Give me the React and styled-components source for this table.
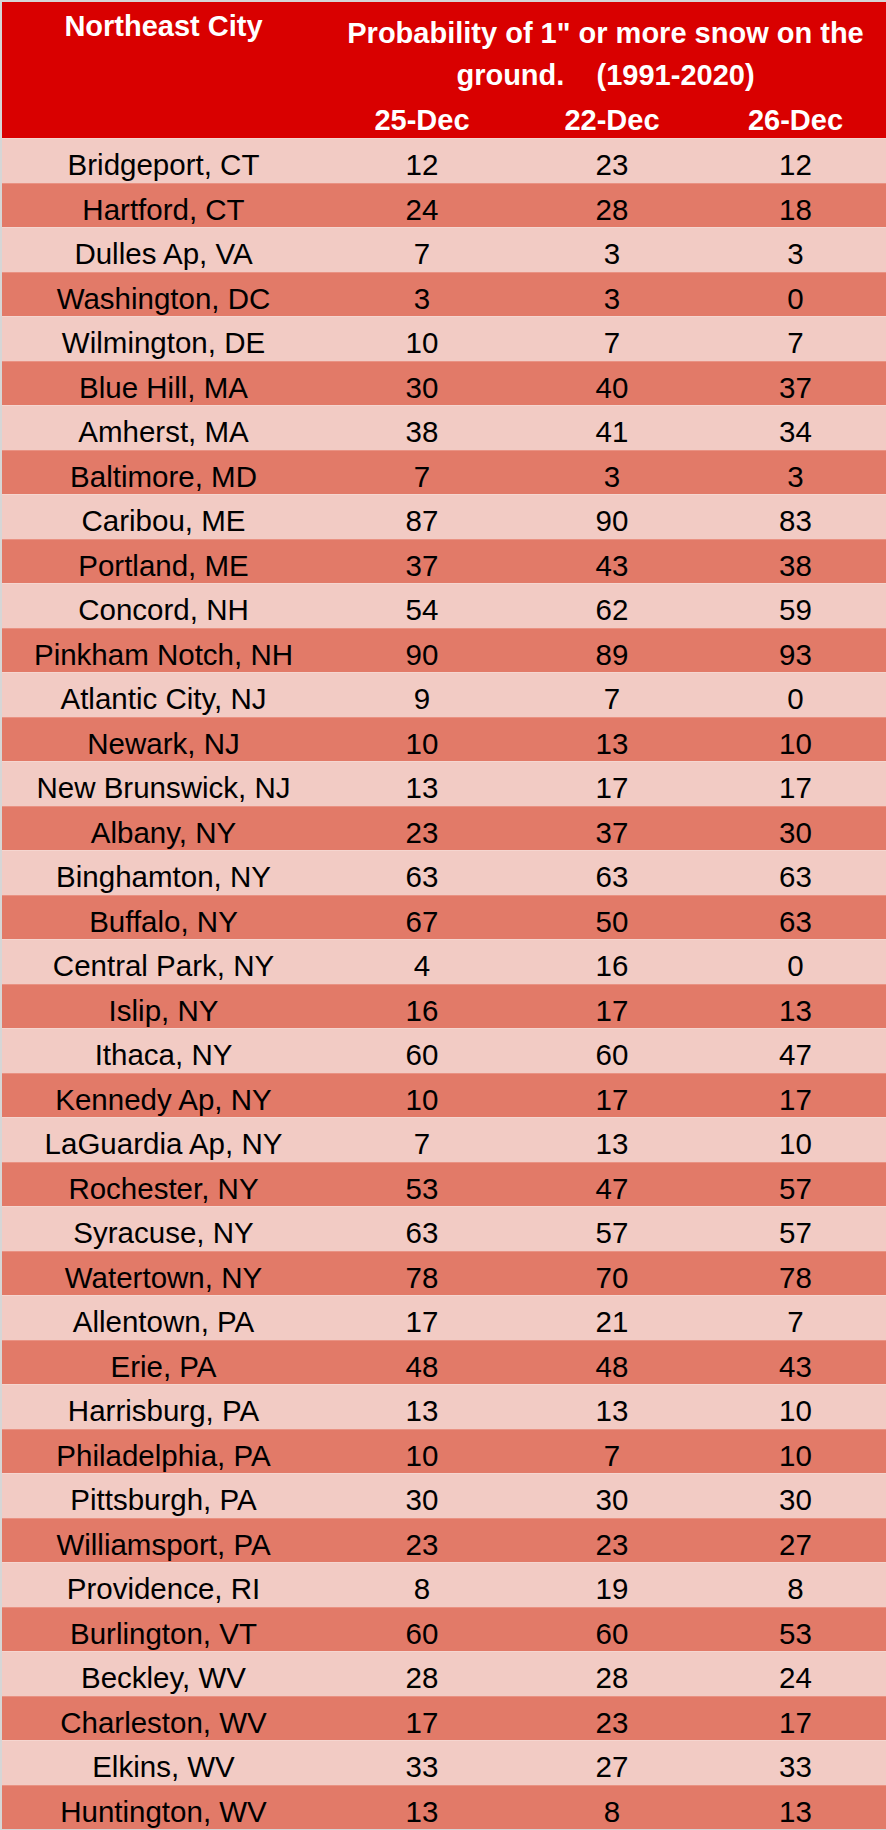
import styled, { createGlobalStyle } from 'styled-components';

const rows = [
    ['Bridgeport, CT', 12, 23, 12],
    ['Hartford, CT', 24, 28, 18],
    ['Dulles Ap, VA', 7, 3, 3],
    ['Washington, DC', 3, 3, 0],
    ['Wilmington, DE', 10, 7, 7],
    ['Blue Hill, MA', 30, 40, 37],
    ['Amherst, MA', 38, 41, 34],
    ['Baltimore, MD', 7, 3, 3],
    ['Caribou, ME', 87, 90, 83],
    ['Portland, ME', 37, 43, 38],
    ['Concord, NH', 54, 62, 59],
    ['Pinkham Notch, NH', 90, 89, 93],
    ['Atlantic City, NJ', 9, 7, 0],
    ['Newark, NJ', 10, 13, 10],
    ['New Brunswick, NJ', 13, 17, 17],
    ['Albany, NY', 23, 37, 30],
    ['Binghamton, NY', 63, 63, 63],
    ['Buffalo, NY', 67, 50, 63],
    ['Central Park, NY', 4, 16, 0],
    ['Islip, NY', 16, 17, 13],
    ['Ithaca, NY', 60, 60, 47],
    ['Kennedy Ap, NY', 10, 17, 17],
    ['LaGuardia Ap, NY', 7, 13, 10],
    ['Rochester, NY', 53, 47, 57],
    ['Syracuse, NY', 63, 57, 57],
    ['Watertown, NY', 78, 70, 78],
    ['Allentown, PA', 17, 21, 7],
    ['Erie, PA', 48, 48, 43],
    ['Harrisburg, PA', 13, 13, 10],
    ['Philadelphia, PA', 10, 7, 10],
    ['Pittsburgh, PA', 30, 30, 30],
    ['Williamsport, PA', 23, 23, 27],
    ['Providence, RI', 8, 19, 8],
    ['Burlington, VT', 60, 60, 53],
    ['Beckley, WV', 28, 28, 24],
    ['Charleston, WV', 17, 23, 17],
    ['Elkins, WV', 33, 27, 33],
    ['Huntington, WV', 13, 8, 13],
];

const dates = ['25-Dec', '22-Dec', '26-Dec'];

export default function App() {
    return (
        <>
            <GlobalStyle />
            <Sheet>
                <Header>
                    <CityHead>Northeast City</CityHead>
                    <Title>
                        Probability of 1" or more snow on the<br />
                        {'ground.    (1991-2020)'}
                    </Title>
                    {dates.map(d => <DateHead key={d}>{d}</DateHead>)}
                </Header>
                {rows.map((r, i) => (
                    <Row key={r[0]} $dark={i % 2 === 1}>
                        <Cell>{r[0]}</Cell>
                        <Cell>{r[1]}</Cell>
                        <Cell>{r[2]}</Cell>
                        <Cell>{r[3]}</Cell>
                    </Row>
                ))}
            </Sheet>
        </>
    );
}

const GlobalStyle = createGlobalStyle`
    html, body {
        margin: 0;
        padding: 0;
        background: #d6d6d6;
    }
`;

const cols = '323px 194px 186px 181px';

const Sheet = styled.div`
    width: 884px;
    padding: 2px 0 0 2px;
    font-family: "Liberation Sans", Arial, sans-serif;
    font-size: 29.5px;
    color: #000;
`;

const Header = styled.div`
    display: grid;
    grid-template-columns: ${cols};
    grid-template-rows: 96px 40px;
    background: #d90000;
    color: #fff;
    font-weight: bold;
    font-size: 29px;
`;

const CityHead = styled.div`
    grid-column: 1;
    grid-row: 1 / 3;
    padding-top: 4px;
    line-height: 41px;
    text-align: center;
`;

const Title = styled.div`
    grid-column: 2 / 5;
    grid-row: 1;
    padding-top: 10px;
    line-height: 42px;
    text-align: center;
    white-space: pre;
`;

const DateHead = styled.div`
    grid-row: 2;
    padding-top: 4px;
    line-height: 36px;
    text-align: center;
`;

const Row = styled.div`
    display: grid;
    grid-template-columns: ${cols};
    box-sizing: border-box;
    height: 44.5px;
    padding-top: 8px;
    line-height: 36px;
    background: ${p => (p.$dark ? '#e27a68' : '#f2cbc4')};
    border-top: 1px solid ${p => (p.$dark ? '#e99283' : '#f5d6d0')};
`;

const Cell = styled.div`
    text-align: center;
`;
